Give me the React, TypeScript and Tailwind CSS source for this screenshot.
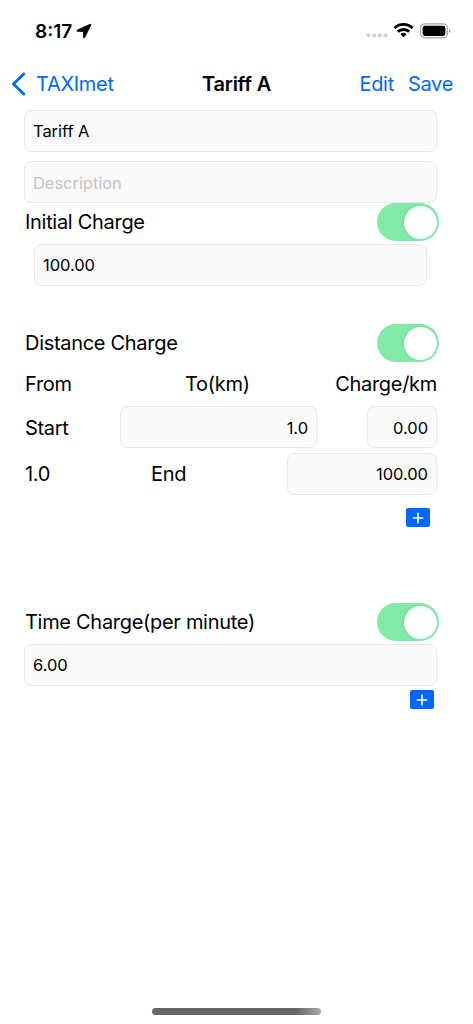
import React from 'react';

interface FieldProps {
  value?: string;
  placeholder?: string;
  className?: string;
}

const Field: React.FC<FieldProps> = ({ value, placeholder, className = '' }) => (
  <div className={`h-[42px] flex items-center rounded-[7px] border border-[#e8e8e8] bg-[#fafafa] px-2 text-[16.5px] tracking-[-0.05px] ${className}`}>
    {value ? <span>{value}</span> : <span className="pt-[2px] text-[#c4c4c6]">{placeholder}</span>}
  </div>
);

const Toggle: React.FC = () => (
  <button className="w-[62px] h-[38px] shrink-0 flex items-center justify-end rounded-full bg-[#82e9a9] pr-[2px]">
    <span className="size-[33px] rounded-full bg-white shadow-[-1px_0_3px_rgba(0,80,30,0.1)]" />
  </button>
);

const SectionHeader: React.FC<{ children: React.ReactNode }> = ({ children }) => (
  <div className="h-[38px] flex items-center justify-between pl-px -mr-[2px]">
    <span className="pb-px">{children}</span>
    <Toggle />
  </div>
);

const AddButton: React.FC<{ className: string }> = ({ className }) => (
  <button className={`w-6 h-[19px] flex items-center justify-center rounded-[2px] bg-[#0068ff] ${className}`}>
    <svg width="12" height="12" viewBox="0 0 12 12" stroke="white" strokeWidth="1.7" strokeLinecap="round">
      <path d="M6 1.4v9.2M1.4 6h9.2" />
    </svg>
  </button>
);

const StatusBar: React.FC = () => (
  <div className="h-[62px] flex items-center justify-between pl-[35px] pr-[22px]">
    <div className="flex items-center gap-1">
      <span className="pt-px text-[19px] font-semibold tracking-[0px]">8:17</span>
      <svg width="16" height="16" viewBox="0 0 16 16">
        <path d="M14.2 1.3 1.4 7.1c-.8.4-.6 1.2.2 1.2l5.8.1.1 5.9c0 .8.9 1 1.2.2L14.8 2c.3-.6-.1-.9-.6-.7Z" stroke="black" strokeWidth="0.9" strokeLinejoin="round" />
      </svg>
    </div>
    <div className="flex items-center">
      <svg className="mt-[9px]" width="22" height="6" viewBox="0 0 22 6" fill="#cfcfd1">
        <circle cx="2.6" cy="2.5" r="2" />
        <circle cx="8.2" cy="2.5" r="2" />
        <circle cx="13.8" cy="2.5" r="2" />
        <circle cx="19.4" cy="2.5" r="2" />
      </svg>
      <svg className="ml-[5px] -mt-[2px]" width="21" height="16" viewBox="0 0 21 16" fill="none" stroke="black" strokeWidth="2.9">
        <path d="M1.5 6a13 13 0 0 1 18 0" />
        <path d="M4.8 9.8a8.2 8.2 0 0 1 11.4 0" />
        <path d="M10.5 15.2 7.4 12.2a4.6 4.6 0 0 1 6.2 0Z" fill="black" stroke="none" />
      </svg>
      <svg className="ml-[6px] -mt-px" width="31" height="16" viewBox="0 0 31 16">
        <rect x="0.7" y="0.9" width="26.6" height="14" rx="4.2" fill="none" stroke="#a3a3a3" strokeWidth="1.2" />
        <rect x="2.6" y="2.8" width="22.8" height="10.2" rx="2.4" />
        <path d="M29 5.7c2 .8 2 3.6 0 4.4Z" fill="#a3a3a3" />
      </svg>
    </div>
  </div>
);

const NavBar: React.FC = () => (
  <div className="h-[44px] grid grid-cols-[1fr_auto_1fr] items-center pl-[11px] pr-5 text-[#0068ff]">
    <button className="flex items-center gap-[10px]">
      <svg width="15" height="24" viewBox="0 0 15 24" fill="none" stroke="currentColor" strokeWidth="2.8" strokeLinecap="round" strokeLinejoin="round">
        <path d="M12.8 2 2.4 12l10.4 10" />
      </svg>
      <span className="pb-px tracking-[-0.3px]">TAXImet</span>
    </button>
    <h1 className="pl-[9px] pb-px font-semibold tracking-[-0.25px] text-black">Tariff A</h1>
    <div className="flex justify-end gap-[14px] pb-px tracking-[-0.3px]">
      <button>Edit</button>
      <button>Save</button>
    </div>
  </div>
);

export default function App() {
  return (
    <div className="w-full h-[1024px] flex flex-col bg-white text-black text-[20px] leading-6 tracking-[-0.3px] font-['Inter','Liberation_Sans',sans-serif]">
      <StatusBar />
      <NavBar />

      <main className="flex-1 pt-1 pl-6 pr-9">
        <Field value="Tariff A" />
        <Field placeholder="Description" className="mt-[9px]" />

        <section>
          <SectionHeader>Initial Charge</SectionHeader>
          <Field value="100.00" className="mt-[3px] mx-[10px]" />
        </section>

        <section className="mt-[38px]">
          <SectionHeader>Distance Charge</SectionHeader>
          <div className="h-11 grid grid-cols-[160px_1fr_auto] items-center pl-px">
            <span>From</span>
            <span>To(km)</span>
            <span>Charge/km</span>
          </div>
          <div className="flex items-center justify-between pl-px">
            <span className="w-[95px] pt-px">Start</span>
            <Field value="1.0" className="w-[197px] justify-end pt-px" />
            <Field value="0.00" className="ml-auto w-[70px] justify-end pt-px" />
          </div>
          <div className="mt-[5px] flex items-center justify-between pl-px">
            <span>1.0</span>
            <span>End</span>
            <Field value="100.00" className="w-[150px] justify-end" />
          </div>
          <AddButton className="mt-[13px] ml-auto mr-[7px]" />
        </section>

        <section className="mt-[76px]">
          <SectionHeader>Time Charge(per minute)</SectionHeader>
          <Field value="6.00" className="mt-[3px]" />
          <AddButton className="mt-1 ml-auto mr-[3px]" />
        </section>
      </main>

      <div className="mb-[9px] mx-auto h-[7px] w-[169px] rounded-full bg-linear-to-r from-[#666] from-85% to-[#aaa]" />
    </div>
  );
}
